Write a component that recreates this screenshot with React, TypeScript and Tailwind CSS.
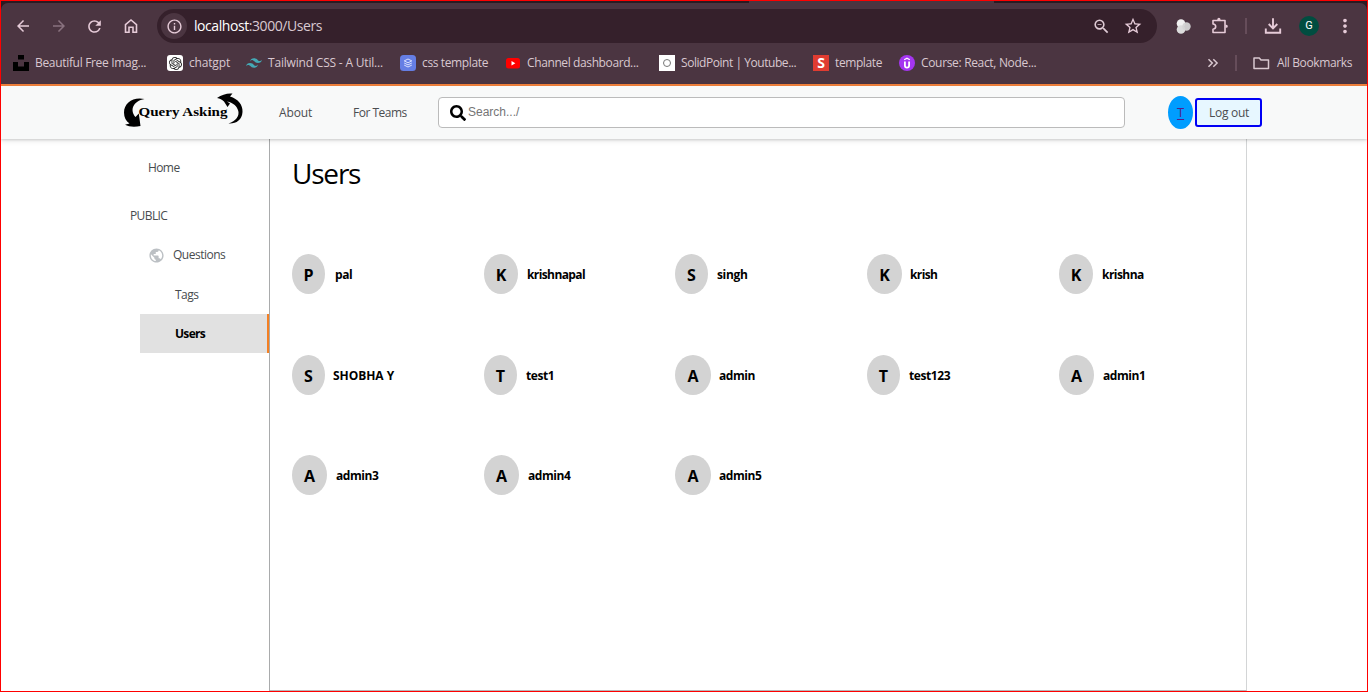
import type { ReactNode } from "react";
import { MdArrowBack, MdArrowForward, MdRefresh, MdOutlineZoomOut, MdStarBorder, MdMoreVert, MdPublic, MdInfoOutline } from "react-icons/md";
import { SiUnsplash, SiOpenai, SiTailwindcss } from "react-icons/si";
import { FaSearch } from "react-icons/fa";

type Bookmark = { icon: ReactNode; label: string; box: string; track: string };

const bookmarks: Bookmark[] = [
  { icon: <SiUnsplash size={16} className="text-black" />, label: "Beautiful Free Imag...", box: "w-[154px]", track: "tracking-[-0.32px]" },
  {
    icon: (
      <span className="flex size-4 items-center justify-center rounded-[3px] bg-white">
        <SiOpenai size={13} className="text-[#222]" />
      </span>
    ),
    label: "chatgpt", box: "w-[79px]", track: "tracking-[-0.17px]",
  },
  { icon: <SiTailwindcss size={16} className="text-[#45a9b5]" />, label: "Tailwind CSS - A Util...", box: "w-[154px]", track: "tracking-[-0.19px]" },
  {
    icon: (
      <svg width="16" height="16" viewBox="0 0 16 16" fill="none">
        <rect width="16" height="16" rx="3.5" fill="#657ee4" />
        <path d="M8 4 11.8 5.9 8 7.8 4.2 5.9ZM4.2 8 8 9.9 11.8 8M4.2 10.1 8 12 11.8 10.1" stroke="#d9e0ff" strokeLinejoin="round" />
      </svg>
    ),
    label: "css template", box: "w-[105px]", track: "tracking-[-0.37px]",
  },
  {
    icon: (
      <svg width="16" height="16" viewBox="0 0 16 16">
        <rect x="1" y="3" width="14" height="10.5" rx="2.5" fill="#f00" />
        <path d="M6.5 6v4.5L10.3 8.2Z" fill="#fff" />
      </svg>
    ),
    label: "Channel dashboard...", box: "w-[154px]", track: "tracking-[-0.39px]",
  },
  {
    icon: (
      <span className="flex size-4 items-center justify-center bg-white">
        <span className="size-2 rounded-full border-[1.5px] border-[#777]" />
      </span>
    ),
    label: "SolidPoint | Youtube...", box: "w-[154px]", track: "tracking-[-0.45px]",
  },
  {
    icon: <span className="flex size-4 items-center justify-center bg-[#e03c31] text-[14px] leading-none font-bold text-white">S</span>,
    label: "template", box: "w-[86px]", track: "tracking-[-0.4px]",
  },
  {
    icon: (
      <svg width="16" height="16" viewBox="0 0 16 16" fill="none">
        <circle cx="8" cy="8" r="8" fill="#a435f0" />
        <path d="M5.2 4.8 8 3.2l2.8 1.6" stroke="#fff" strokeWidth="1.3" />
        <path d="M5.9 6.5v4a2.1 2.1 0 0 0 4.2 0v-4" stroke="#fff" strokeWidth="1.8" />
      </svg>
    ),
    label: "Course: React, Node...", box: "w-[160px]", track: "tracking-[-0.33px]",
  },
];

function Toolbar() {
  return (
    <div className="h-[83px] shrink-0 bg-[linear-gradient(to_right,#2b1a22_748px,#4b3541_748px,#4b3541_993px,#2b1a22_993px)] pt-[2px] text-[#e6cbd8]">
      <div className="h-[81px] rounded-t-[7px] bg-[#4b3541]">
        <div className="flex h-[46px] items-center pl-[13px]">
          <MdArrowBack size={18} />
          <MdArrowForward size={18} className="ml-[18px] text-[#89727f]" />
          <MdRefresh size={19} className="ml-[17px]" />
          <svg className="ml-[18px]" width="18" height="18" viewBox="0 0 18 18" fill="none" stroke="currentColor" strokeWidth="1.6">
            <path d="M3.5 7.6 9 3l5.500 4.600V15.300H11V10.200H7v5.100H3.500Z" />
          </svg>
          <div className="ml-[17px] flex h-[34px] w-[1000px] items-center rounded-full bg-[#35202b] pl-[4px]">
            <span className="flex size-[26px] items-center justify-center rounded-full bg-[#4b3541]">
              <MdInfoOutline size={17} />
            </span>
            <span className="ml-[7px] pb-px text-[14px] tracking-[-0.43px] text-[#d9c9d1]">
              <span className="text-white">localhost</span>:3000/Users
            </span>
            <MdOutlineZoomOut size={19} className="ml-auto text-[#dfcbd5]" />
            <MdStarBorder size={20} className="mr-[14px] ml-[12px]" />
          </div>
          <svg className="ml-[18px]" width="17" height="17" viewBox="0 0 17 17">
            <circle cx="6" cy="5.500" r="4.300" fill="#f1f1f1" />
            <circle cx="6" cy="11.500" r="4.300" fill="#dcdcdc" />
            <circle cx="11.500" cy="8.500" r="4.200" fill="#d4d4d4" fillOpacity=".95" />
          </svg>
          <svg className="ml-[19px]" width="18" height="18" viewBox="0 0 18 18" fill="none" stroke="currentColor" strokeWidth="1.6" strokeLinejoin="round">
            <path d="M2 3.500H14V15.500H2V12.200C5.600 12 5.600 7.200 2 7Z" />
            <path d="M6.300 3V2.400a1.600 1.600 0 0 1 3.200 0V3ZM14.500 7.800h.8a1.500 1.500 0 0 1 0 3H14.500Z" fill="currentColor" stroke="none" />
          </svg>
          <span className="ml-[16px] h-4 w-[2px] bg-[#664d5a]" />
          <svg className="ml-[16px]" width="20" height="20" viewBox="0 0 20 20" fill="none" stroke="currentColor" strokeWidth="1.900">
            <path d="M10 2.200V12M5.700 8 10 12.300 14.300 8M2.800 12.500V16.700H17.200V12.500" />
          </svg>
          <span className="ml-[16px] flex size-5 items-center justify-center rounded-full bg-[#004d40] font-['Roboto',sans-serif] text-[11px] text-white">G</span>
          <MdMoreVert size={22} className="ml-[15px]" />
        </div>
        <div className="flex h-[28px] items-center pl-[12px] text-[12px] text-[#d9c8d0]">
          {bookmarks.map((b) => (
            <div key={b.label} className={`flex shrink-0 items-center gap-[6px] whitespace-nowrap ${b.box}`}>
              {b.icon}
              <span className={b.track}>{b.label}</span>
            </div>
          ))}
          <svg className="ml-[147px] shrink-0" width="14" height="12" viewBox="0 0 14 12" fill="none" stroke="currentColor" strokeWidth="1.500">
            <path d="M2.500 2.200 6.300 6 2.500 9.800M7.300 2.200 11.100 6 7.300 9.800" />
          </svg>
          <span className="ml-[15px] h-4 w-[2px] bg-[#664d5a]" />
          <svg className="ml-[16px] shrink-0" width="17" height="14" viewBox="0 0 17 14" fill="none" stroke="currentColor" strokeWidth="1.500" strokeLinejoin="round">
            <path d="M1 2H6.300L8 4H15.500V12.500H1Z" />
          </svg>
          <span className="ml-[7px] tracking-[-0.38px] whitespace-nowrap">All Bookmarks</span>
        </div>
      </div>
    </div>
  );
}

function Logo() {
  return (
    <svg width="122" height="38" viewBox="0 0 122 38">
      <path d="M23.500 7C12 4.500 3 11 3 20.500C3 25.500 5 29 8.500 31.500L4 32.800C8 35 14 35.200 19.500 34L17.800 21.500L14.500 25C8.500 18 12 9 23.500 7Z" fill="#000" />
      <path d="M96 6C101 2.500 106 1 111.500 1.500L109 4.600C117 7 122 13 121.500 20C121 28 115 32 107.500 31.500C115 29 118.500 24 117.300 19C116 14 112 10.500 106 9.500L109 11.500L106.500 15L103 9.500C101 7.500 99 6.500 96 6Z" fill="#000" />
      <text x="17.500" y="23.500" textLength="89" lengthAdjust="spacingAndGlyphs" fontFamily="Liberation Serif, serif" fontWeight="700" fontSize="12.500">
        Query Asking
      </text>
    </svg>
  );
}

function Header() {
  return (
    <header className="relative flex h-[53px] shrink-0 items-center bg-[#f8f9f9] pl-[120px] text-[12px] text-[#4b4d50] shadow-[0_1px_2px_rgba(0,0,0,0.12),0_2px_5px_rgba(0,0,0,0.1)]">
      <div className="w-[158px] pb-[4px]"><Logo /></div>
      <span className="w-[74px] tracking-[-0.15px]">About</span>
      <span className="w-[85px] tracking-[-0.5px]">For Teams</span>
      <div className="flex h-[31px] w-[687px] items-center rounded-[4px] border border-[#bbb] bg-white pl-[11px]">
        <FaSearch size={16} className="text-black" />
        <span className="ml-[2px] pb-[2px] font-['Liberation_Sans',sans-serif] text-[12px] text-[#757575]">Search.../</span>
      </div>
      <span className="ml-[43px] flex h-[33px] w-[25px] items-center justify-center rounded-[50%] bg-[#009dff] pt-px text-[13px] text-[#551a8b] underline underline-offset-2">T</span>
      <button className="ml-[2px] h-[29px] w-[67px] rounded-[3px] border-2 border-[#0000f5] bg-[#e7f7ff] pl-px tracking-[-0.28px]">Log out</button>
    </header>
  );
}

function Sidebar() {
  return (
    <aside className="flex w-[269px] shrink-0 flex-col border-r border-[#a9abac] text-[12px] text-[#484b4e]">
      <div className="mt-[9px] flex h-[40px] items-center pl-[147px] tracking-[-0.6px]">Home</div>
      <div className="mt-[8px] flex h-[40px] items-center pl-[129px] tracking-[-0.6px]">PUBLIC</div>
      <div className="-mt-px flex h-[40px] items-center pl-[147px]">
        <MdPublic size={17} className="text-[#bcc0c4]" />
        <span className="ml-[8px] tracking-[-0.5px]">Questions</span>
      </div>
      <div className="flex h-[39px] items-center pl-[174px] tracking-[-0.5px]">Tags</div>
      <div className="ml-[139px] flex h-[39px] items-center border-r-2 border-[#f48024] bg-[#e1e1e1] pl-[35px] font-bold tracking-[-0.7px] text-black">Users</div>
    </aside>
  );
}

const users: [string, string, string, string][] = [
  ["pal", "w-[33px]", "ml-[10px]", "tracking-[-0.4px]"],
  ["krishnapal", "w-[34px]", "ml-[9px]", "tracking-[-0.6px]"],
  ["singh", "w-[33px]", "ml-[9px]", "tracking-[-0.35px]"],
  ["krish", "w-[35px]", "ml-[8px]", "tracking-[-0.6px]"],
  ["krishna", "w-[34px]", "ml-[9px]", "tracking-[-0.55px]"],
  ["SHOBHA Y", "w-[33px]", "ml-[8px]", "tracking-[-0.05px]"],
  ["test1", "w-[33px]", "ml-[9px]", "tracking-[-0.4px]"],
  ["admin", "w-[36px]", "ml-[8px]", "tracking-[-0.45px]"],
  ["test123", "w-[33px]", "ml-[9px]", "tracking-[-0.4px]"],
  ["admin1", "w-[35px]", "ml-[9px]", "tracking-[-0.45px]"],
  ["admin3", "w-[35px]", "ml-[9px]", "tracking-[-0.45px]"],
  ["admin4", "w-[35px]", "ml-[9px]", "tracking-[-0.45px]"],
  ["admin5", "w-[36px]", "ml-[8px]", "tracking-[-0.45px]"],
];

function UserGrid() {
  return (
    <main className="flex w-[977px] flex-col border-r border-b border-r-[#d3d5d6] border-b-[#b5b7b8] pl-[22px] text-black">
      <h1 className="mt-[14px] h-[40px] text-[28px] leading-[40px] tracking-[-1.2px]">Users</h1>
      <div className="mt-[61px] grid auto-rows-[40px] grid-cols-[192px_191px_192px_192px_180px] gap-y-[60.500px]">
        {users.map(([name, w, ml, track]) => (
          <div key={name} className="flex items-center">
            <span className={`flex h-[40px] items-center justify-center rounded-[50%] bg-[#d3d3d3] pt-[2px] text-[16px] font-bold ${w}`}>
              {name[0].toUpperCase()}
            </span>
            <span className={`pt-[2px] text-[12px] font-bold whitespace-nowrap ${ml} ${track}`}>{name}</span>
          </div>
        ))}
      </div>
    </main>
  );
}

export default function App() {
  return (
    <div className="flex h-[692px] w-[1368px] flex-col overflow-hidden border border-[#ff0000] bg-white font-['Open_Sans',sans-serif]">
      <Toolbar />
      <div className="h-[2px] shrink-0 bg-[#f0803c]" />
      <Header />
      <div className="flex min-h-0 grow">
        <Sidebar />
        <UserGrid />
      </div>
    </div>
  );
}
